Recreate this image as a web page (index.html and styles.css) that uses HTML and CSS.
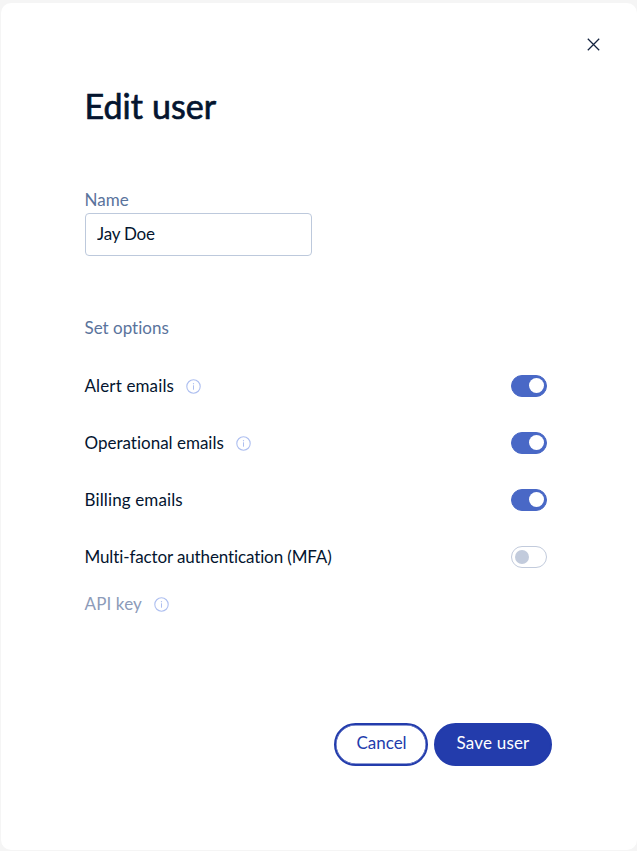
FILE: index.html
```html
<!DOCTYPE html>
<html lang="en">
<head>
<meta charset="utf-8">
<title>Edit user</title>
<link rel="stylesheet" href="styles.css">
</head>
<body>
<svg class="sprite" aria-hidden="true">
  <symbol id="info" viewBox="0 0 15 15">
    <circle cx="7.5" cy="7.5" r="6.7" fill="none" stroke="currentColor" stroke-width="1.1"/>
    <path d="M7.5 6.3v4.4" stroke="currentColor" stroke-width="1"/>
    <circle cx="7.5" cy="4.7" r=".65" fill="currentColor"/>
  </symbol>
</svg>
<main class="dialog">
  <header class="top">
    <button class="close" aria-label="Close"><svg viewBox="0 0 13 13"><path d="M.8.8l11.4 11.4M12.2.8L.8 12.2"/></svg></button>
  </header>
  <h1 class="title">Edit user</h1>
  <label class="label" for="name">Name</label>
  <input class="input" id="name" value="Jay Doe">
  <h2 class="label section">Set options</h2>
  <div class="options">
    <div class="option"><span class="wide">Alert emails</span><svg class="info"><use href="#info"/></svg><span class="switch on"></span></div>
    <div class="option"><span>Operational emails</span><svg class="info"><use href="#info"/></svg><span class="switch on"></span></div>
    <div class="option"><span class="wide">Billing emails</span><span class="switch on"></span></div>
    <div class="option"><span class="tight">Multi-factor authentication (MFA)</span><span class="switch"></span></div>
  </div>
  <div class="api"><span class="wide">API key</span><svg class="info"><use href="#info"/></svg></div>
  <footer class="actions">
    <button class="btn cancel">Cancel</button>
    <button class="btn save">Save user</button>
  </footer>
</main>
</body>
</html>
```
FILE: styles.css
```css
* { box-sizing: border-box; }
body {
  margin: 0;
  height: 851px;
  padding: 3px 0 1px 1px;
  background: #f5f5f5;
  color: #04152f;
  font: 17px/24px Lato, "Noto Sans", sans-serif;
  font-variant-ligatures: none;
  overflow: hidden;
}
button, input { font: inherit; color: inherit; }
.sprite { display: none; }
.dialog {
  height: 847px;
  padding: 0 85px 0 83.5px;
  background: #fff;
  border-radius: 10px;
}
.top {
  display: flex;
  justify-content: flex-end;
  height: 79px;
  padding-top: 35px;
  margin-right: -48px;
}
.close { width: 13px; height: 13px; padding: 0; border: 0; background: none; }
.close svg { display: block; width: 13px; height: 13px; fill: none; stroke: #14233f; stroke-width: 1.25; }
.title {
  margin: 0 0 80px;
  height: 48px;
  font-size: 34px;
  line-height: 48px;
  font-weight: 400;
  letter-spacing: .08px;
  -webkit-text-stroke: .7px #04152f;
}
.label { display: block; height: 24px; margin-top: -22px; color: #5a739c; font-weight: 400; }
.input {
  display: block;
  width: 227px;
  height: 43px;
  margin: 1px 0 0 .5px;
  padding: 0 10px 2px 11px;
  border: 1px solid #bdc9dc;
  border-radius: 4px;
  background: #fff;
  letter-spacing: -.2px;
  outline: 0;
}
.section { margin: 60px 0 0; font-size: 17px; }
.options { margin-top: 17px; }
.option { display: flex; align-items: center; height: 57.2px; }
.wide { letter-spacing: .13px; }
.tight { letter-spacing: -.12px; }
.tight, .section + .options .wide { white-space: nowrap; }
.info { width: 15px; height: 15px; margin: 2px 0 0 12px; color: #aebff0; }
.switch {
  width: 36px;
  height: 22px;
  margin-left: auto;
  margin-right: 5px;
  padding: 3px;
  border: 1px solid #c2cbdc;
  border-radius: 11px;
}
.switch::before { content: ""; display: block; width: 14px; height: 14px; border-radius: 50%; background: #c2cbdc; }
.switch.on { padding-left: 17px; border-color: #4968c6; background: #4968c6; }
.switch.on::before { background: #fff; width: 15px; height: 15px; margin-top: -.5px; }
.api { display: flex; align-items: center; height: 24px; margin-top: 6px; color: #8c9bb9; }
.actions { display: flex; justify-content: flex-end; gap: 6px; margin-top: 107px; }
.btn { height: 43px; padding: 0 0 2px; border: 2px solid #233cac; border-radius: 22px; }
.cancel { width: 94px; padding-left: 1px; background: #fff; color: #233cac; box-shadow: inset 0 0 0 .5px #233cac; }
.save { width: 118px; background: #233cac; color: #fff; letter-spacing: .2px; }
```
